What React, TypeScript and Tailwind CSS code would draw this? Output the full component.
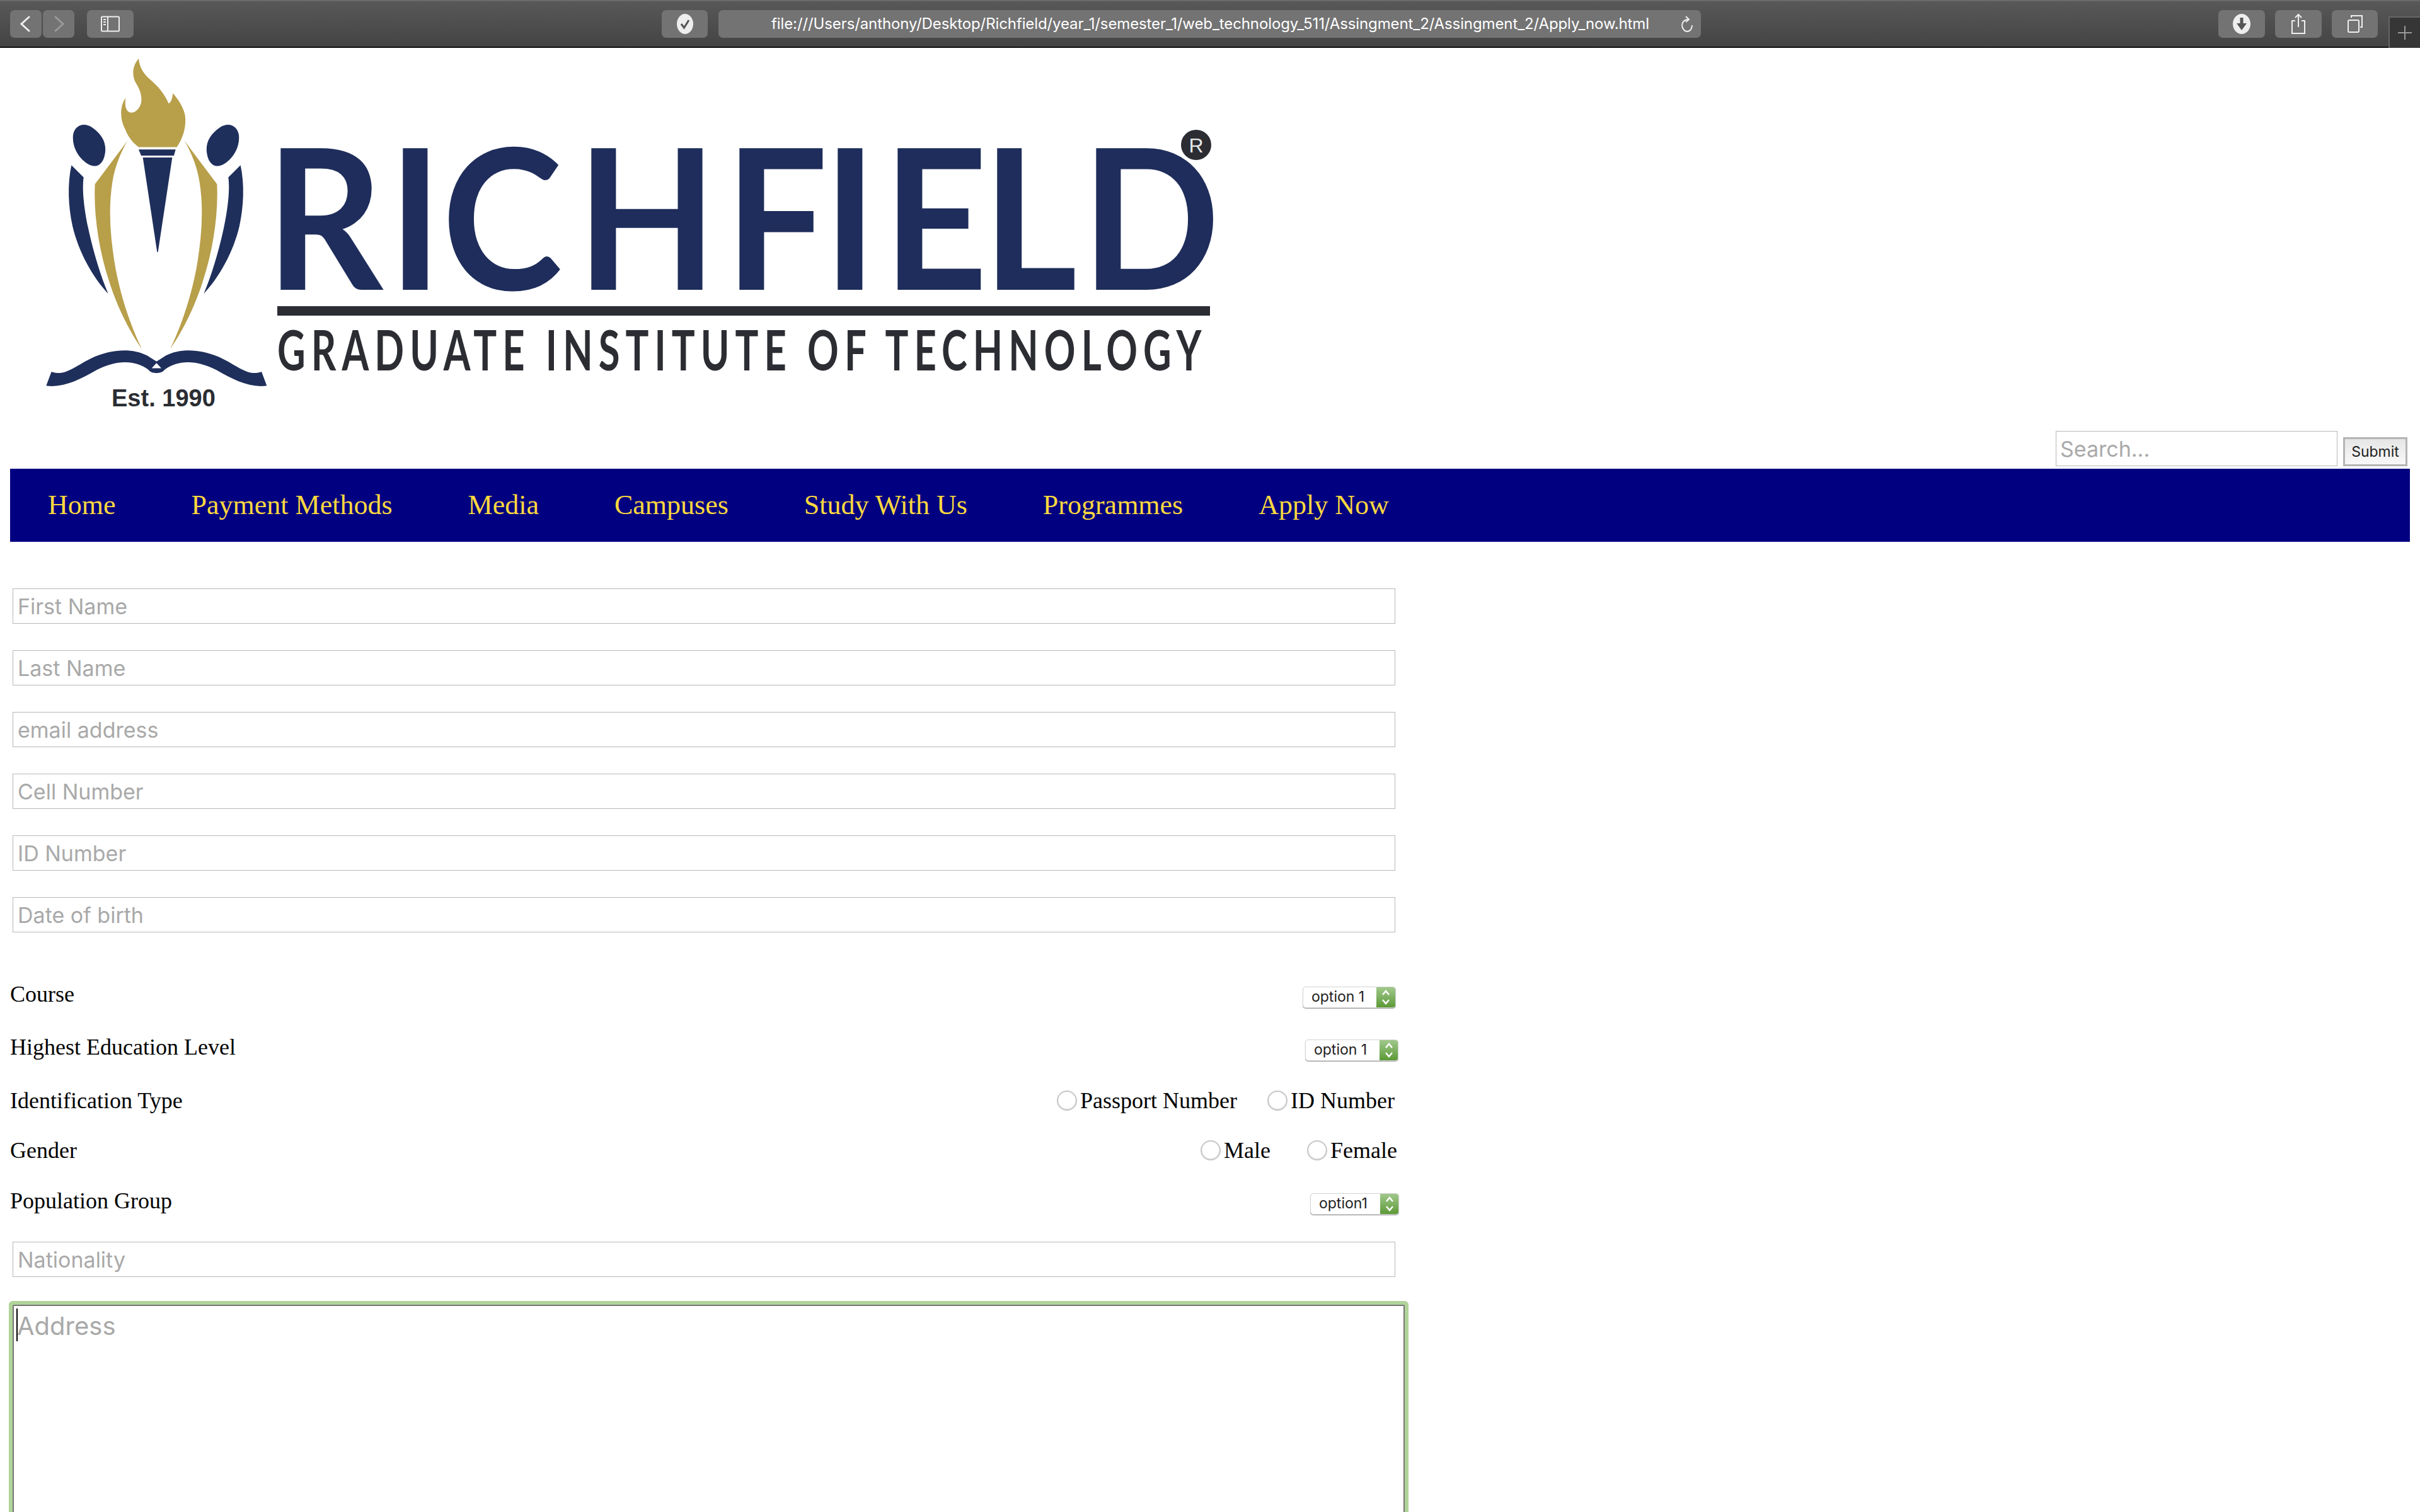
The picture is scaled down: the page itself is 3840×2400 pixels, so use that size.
import React from "react";

const navItems = [
  "Home",
  "Payment Methods",
  "Media",
  "Campuses",
  "Study With Us",
  "Programmes",
  "Apply Now",
];

const topFields = [
  "First Name",
  "Last Name",
  "email address",
  "Cell Number",
  "ID Number",
  "Date of birth",
];

const fieldClass =
  "block ml-[4px] w-[2194px] h-[56px] border border-[#b8b8b8] bg-white px-[7px] text-[34px] font-['Inter',sans-serif] outline-none placeholder:text-[#a9a9a9]";

const ToolButton = ({
  className,
  children,
}: {
  className: string;
  children: React.ReactNode;
}) => (
  <div
    className={`h-[44px] rounded-[7px] bg-[#737373] flex items-center justify-center ${className}`}
  >
    {children}
  </div>
);

const Toolbar = () => (
  <div className="h-[76px] flex items-start pt-[14px] border-t-2 border-b-2 border-t-[#6a6a6a] border-b-[#111111] bg-gradient-to-b from-[#585858] to-[#444444]">
    <ToolButton className="w-[50px] ml-[16px]">
      <svg width="20" height="26" viewBox="0 0 20 26" fill="none" stroke="#eeeeee" strokeWidth="3" strokeLinecap="round">
        <path d="M15 2 L3 13 L15 24" />
      </svg>
    </ToolButton>
    <ToolButton className="w-[50px] ml-[2px]">
      <svg width="20" height="26" viewBox="0 0 20 26" fill="none" stroke="#9a9a9a" strokeWidth="3" strokeLinecap="round">
        <path d="M5 2 L17 13 L5 24" />
      </svg>
    </ToolButton>
    <ToolButton className="w-[74px] ml-[20px]">
      <svg width="32" height="26" viewBox="0 0 32 26" fill="none" stroke="#eeeeee" strokeWidth="2">
        <rect x="2" y="1.5" width="28" height="23" rx="1.5" />
        <path d="M12 1.5 V24.5" />
        <path d="M5 6 H9 M5 10 H9 M5 14 H9" />
      </svg>
    </ToolButton>
    <ToolButton className="w-[73px] ml-[838px]">
      <svg width="26" height="32" viewBox="0 0 26 32">
        <ellipse cx="13" cy="16" rx="13" ry="16" fill="#eeeeee" />
        <path d="M7 16 L11.5 22 L19 10" fill="none" stroke="#555555" strokeWidth="3" />
      </svg>
    </ToolButton>
    <ToolButton className="w-[1559px] ml-[17px] relative">
      <span className="ml-[2px] text-[24px] tracking-[-0.11px] text-white font-['Inter',sans-serif] whitespace-nowrap">
        file:///Users/anthony/Desktop/Richfield/year_1/semester_1/web_technology_511/Assingment_2/Assingment_2/Apply_now.html
      </span>
      <svg className="absolute right-[11px] top-[9px]" width="22" height="28" viewBox="0 0 22 28" fill="none" stroke="#eeeeee" strokeWidth="2">
        <path d="M13 6 C6 6 3 11 3 15 C3 20 7 25 11 25 C16 25 19 20 19 15" />
        <path d="M9 1 L14 6 L9 10" />
      </svg>
    </ToolButton>
    <ToolButton className="w-[74px] ml-[821px]">
      <svg width="28" height="32" viewBox="0 0 28 32">
        <ellipse cx="14" cy="16" rx="14" ry="16" fill="#eeeeee" />
        <path d="M11.5 6 H16.5 V15 H22 L14 26 L6 15 H11.5 Z" fill="#555555" />
      </svg>
    </ToolButton>
    <ToolButton className="w-[74px] ml-[16px]">
      <svg width="24" height="34" viewBox="0 0 24 34" fill="none" stroke="#eeeeee" strokeWidth="2">
        <path d="M7 12 H2 V32 H22 V12 H17" />
        <path d="M12 22 V2 M7 7 L12 2 L17 7" />
      </svg>
    </ToolButton>
    <ToolButton className="w-[73px] ml-[16px]">
      <svg width="26" height="30" viewBox="0 0 26 30" fill="none" stroke="#eeeeee" strokeWidth="2">
        <path d="M7 5 V2 H24 V20 H21" />
        <rect x="2" y="9" width="17" height="19" rx="2" />
      </svg>
    </ToolButton>
    <div className="w-[50px] h-[50px] ml-[17px] mt-[10px] border-t-2 border-l-2 border-[#666666] bg-[#363636] flex items-center justify-center">
      <svg width="24" height="24" viewBox="0 0 24 24" stroke="#9a9a9a" strokeWidth="2">
        <path d="M12 1 V23 M1 12 H23" />
      </svg>
    </div>
  </div>
);

const Logo = () => (
  <svg className="block" width="1960" height="608" viewBox="0 76 1960 608">
    <g transform="translate(40 70) scale(0.33333 0.38462)">
      <path
        fill="#b89f4a"
        d="M540 60 C510 90 505 130 530 165 C565 215 560 260 520 280 C490 290 470 270 478 222 C450 255 450 310 475 350 C490 385 515 410 540 425 L722 425 C750 390 770 340 760 290 C750 255 725 225 703 203 C700 225 695 240 683 245 C665 210 640 180 600 150 C565 125 545 100 540 60 Z"
      />
      <path fill="#1f2f5c" d="M540 435 L716 435 L708 460 L552 460 Z" />
      <path fill="#1f2f5c" d="M560 468 L700 468 L632 858 L628 858 Z" />
      <g>
        <path fill="#1f2f5c" d="M228 375 C235 335 280 320 320 345 C365 372 392 410 378 460 C365 505 330 515 290 490 C250 465 222 420 228 375 Z" />
        <path fill="#1f2f5c" d="M220 500 L278 550 C270 600 280 680 300 760 C325 860 360 960 395 1030 C320 960 255 860 225 750 C205 670 200 580 220 500 Z" />
        <path fill="#b89f4a" d="M488 398 L332 578 C325 700 350 850 400 980 C440 1090 500 1190 555 1258 C500 1160 450 1030 425 900 C405 790 395 680 415 570 C425 510 455 445 488 398 Z" />
      </g>
      <g transform="translate(1245 0) scale(-1 1)">
        <path fill="#1f2f5c" d="M228 375 C235 335 280 320 320 345 C365 372 392 410 378 460 C365 505 330 515 290 490 C250 465 222 420 228 375 Z" />
        <path fill="#1f2f5c" d="M220 500 L278 550 C270 600 280 680 300 760 C325 860 360 960 395 1030 C320 960 255 860 225 750 C205 670 200 580 220 500 Z" />
        <path fill="#b89f4a" d="M488 398 L332 578 C325 700 350 850 400 980 C440 1090 500 1190 555 1258 C500 1160 450 1030 425 900 C405 790 395 680 415 570 C425 510 455 445 488 398 Z" />
      </g>
      <path fill="#1f2f5c" d="M125 1352 C190 1375 250 1320 330 1290 C420 1258 510 1255 580 1285 L625 1310 L670 1285 C740 1255 830 1258 920 1290 C1000 1320 1060 1375 1125 1352 L1150 1410 C1070 1420 990 1385 910 1345 C820 1305 730 1300 662 1345 C650 1362 600 1362 588 1345 C520 1300 430 1305 340 1345 C260 1385 180 1420 100 1410 Z" />
      <path fill="#ffffff" d="M625 1316 L648 1338 L602 1338 Z" />
    </g>
    <text x="177" y="645" fontFamily="'Liberation Sans', sans-serif" fontWeight="700" fontSize="38" fill="#2b2d33">
      Est. 1990
    </text>
    <g transform="scale(0.93 1)">
      <text
        x="453.8 662.4 753.8 983.9 1236.6 1404.3 1506.5 1676.3 1845.2"
        y="460"
        fontFamily="Lato, sans-serif"
        fontWeight="700"
        fontSize="311"
        fill="#1e2d5b"
      >
        RICHFIELD
      </text>
    </g>
    <circle cx="1898" cy="230" r="24" fill="#2b2d33" />
    <text x="1898" y="242" textAnchor="middle" fontFamily="'Liberation Sans', sans-serif" fontWeight="400" fontSize="32" fill="#e8e8e8">
      R
    </text>
    <rect x="440" y="486" width="1480" height="15" fill="#2b2d33" />
    <g transform="translate(440 588) scale(0.7 1)">
      <text x="0" y="0" fontFamily="Lato, sans-serif" fontWeight="700" fontSize="88" fill="#2b2d33" textLength="2095" lengthAdjust="spacing">
        GRADUATE INSTITUTE OF TECHNOLOGY
      </text>
    </g>
  </svg>
);

const Select = ({ label, className, green }: { label: string; className: string; green: string }) => (
  <div
    className={`h-[34px] flex items-stretch rounded-[5px] border border-[#d4d4d4] shadow-[0_1px_1px_#9a9a9a] bg-white overflow-hidden ${className}`}
  >
    <span className="flex-1 pl-[13px] text-[23px] leading-[30px] text-[#222222] font-['Inter',sans-serif]">
      {label}
    </span>
    <span className={`${green} flex items-center justify-center bg-gradient-to-b from-[#a0c88a] to-[#5c9a34]`}>
      <svg width="14" height="26" viewBox="0 0 14 26" fill="none" stroke="#ffffff" strokeWidth="2.5">
        <path d="M2 9 L7 3 L12 9 M2 17 L7 23 L12 17" />
      </svg>
    </span>
  </div>
);

const Radio = ({ label }: { label: string }) => (
  <label className="flex items-center gap-[5px]">
    <input
      type="radio"
      className="appearance-none w-[32px] h-[32px] rounded-full border-2 border-[#c6c6c6] bg-white shadow-[inset_0_-1px_2px_#dddddd]"
    />
    {label}
  </label>
);

const Field = ({
  label,
  className,
  labelClass,
  children,
}: {
  label: string;
  className: string;
  labelClass: string;
  children: React.ReactNode;
}) => (
  <div className={`flex items-center justify-between w-[2204px] ${className}`}>
    <span className={labelClass}>{label}</span>
    {children}
  </div>
);

const App = () => (
  <div className="h-[2400px] overflow-hidden bg-white">
    <Toolbar />
    <Logo />
    <div className="px-4">
      <div className="h-[60px] flex items-end justify-end pb-[4px] pr-[4px]">
        <input
          type="text"
          placeholder="Search..."
          className="w-[447px] h-[56px] border border-[#b8b8b8] bg-white px-[6px] text-[34px] font-['Inter',sans-serif] outline-none placeholder:text-[#a9a9a9]"
        />
        <button className="w-[102px] h-[46px] ml-[9px] border-[3px] border-[#b4b4b4] bg-gradient-to-b from-[#e6e6e6] to-[#f8f8f8] text-[23px] text-[#222222] font-['Inter',sans-serif]">
          Submit
        </button>
      </div>
      <div className="h-[116px] flex items-center bg-[#000080] text-[44px] text-[#fdd83f] font-['Liberation_Serif',serif]">
        {navItems.map((item) => (
          <div key={item} className="px-[60px] whitespace-nowrap">
            {item}
          </div>
        ))}
      </div>

      <div className="mt-[74px] flex flex-col gap-[42px]">
        {topFields.map((field) => (
          <input key={field} type="text" placeholder={field} className={fieldClass} />
        ))}
      </div>

      <div className="mt-[61px] text-[36px] text-black font-['Liberation_Serif',serif]">
        <Field label="Course" className="h-[84px]" labelClass="pb-[10px]">
          <Select label="option 1" className="w-[148px] mr-[5px]" green="w-[30px]" />
        </Field>
        <Field label="Highest Education Level" className="h-[84px]" labelClass="pb-[10px]">
          <Select label="option 1" className="w-[148px] mr-[1px]" green="w-[29px]" />
        </Field>
        <Field label="Identification Type" className="h-[76px]" labelClass="">
          <div className="flex items-center gap-[48px] mr-[7px]">
            <Radio label="Passport Number" />
            <Radio label="ID Number" />
          </div>
        </Field>
        <Field label="Gender" className="h-[84px]" labelClass="pb-[3px]">
          <div className="flex items-center gap-[58px] mr-[3px] pb-[2px]">
            <Radio label="Male" />
            <Radio label="Female" />
          </div>
        </Field>
        <Field label="Population Group" className="h-[84px]" labelClass="pb-[10px]">
          <Select label="option1" className="w-[141px]" green="w-[29px]" />
        </Field>
      </div>

      <input type="text" placeholder="Nationality" className={`${fieldClass} mt-[18px]`} />

      <div className="relative mt-[44px] ml-[4px] w-[2209px]">
        <textarea
          placeholder="Address"
          className="block w-full h-[420px] resize-none border-2 border-[#767676] bg-white px-[5px] py-[2px] text-[40px] font-['Inter',sans-serif] outline-none shadow-[0_0_0_6px_#b0d49a] rounded-[2px] placeholder:text-[#a9a9a9]"
        />
        <div className="absolute left-[6px] top-[6px] w-[2px] h-[52px] bg-black" />
      </div>
    </div>
  </div>
);

export default App;
